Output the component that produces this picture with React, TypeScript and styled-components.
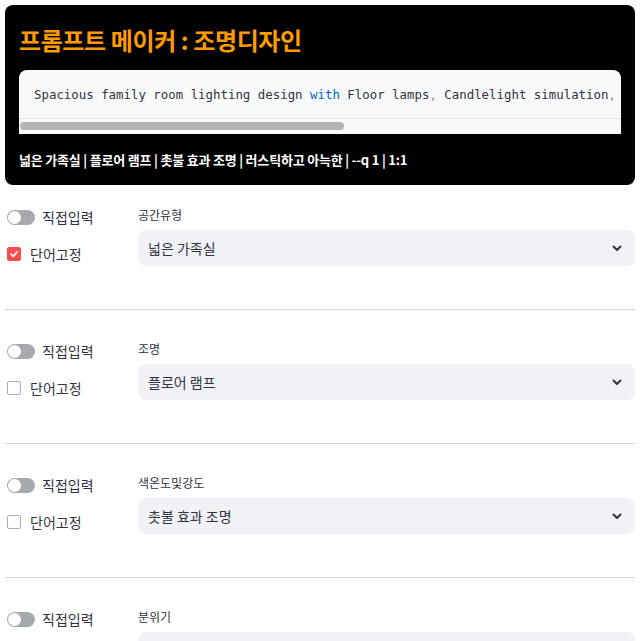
import styled, { createGlobalStyle } from "styled-components";

const GlobalStyle = createGlobalStyle`
  body {
    margin: 0;
    padding: 5px;
    background: #ffffff;
    font-family: "Noto Sans", "Noto Sans CJK KR", sans-serif;
    color: #31333f;
  }
`;

const Header = styled.div`
  background: #000000;
  border-radius: 8px;
  padding: 17px 14px 15px;
  display: flex;
  flex-direction: column;
`;

const Title = styled.h1`
  margin: 0 0 12px;
  font-family: "Noto Sans CJK KR", "Noto Sans", sans-serif;
  font-size: 24px;
  line-height: 36px;
  font-weight: 700;
  color: #ff9a00;
  letter-spacing: -0.4px;
`;

const CodeBox = styled.div`
  background: #f8f9fb;
  border-radius: 8px 8px 0 0;
  overflow: hidden;
`;

const CodeLine = styled.pre`
  margin: 0;
  padding: 15px 15px 13px;
  font-family: "DejaVu Sans Mono", "Liberation Mono", monospace;
  font-size: 12.4px;
  line-height: 20px;
  color: #31333f;
  white-space: pre;
  overflow: hidden;
  border-bottom: 1px solid #e4e5e8;
`;

const Keyword = styled.span`
  color: #0068c9;
`;

const Punct = styled.span`
  color: #8a8d96;
`;

const ScrollTrack = styled.div`
  height: 15px;
  background: #fafafa;
  padding: 3px 1px;
  box-sizing: border-box;
`;

const ScrollThumb = styled.div<{ $width: number }>`
  height: 8px;
  width: ${(p) => p.$width}%;
  background: #b5b5b5;
  border-radius: 4px;
`;

const Summary = styled.div`
  margin-top: 16px;
  font-family: "Noto Sans CJK KR", "Noto Sans", sans-serif;
  font-size: 13px;
  line-height: 20px;
  font-weight: 700;
  color: #ffffff;
  letter-spacing: -0.2px;
`;

const Section = styled.div<{ $first?: boolean }>`
  display: flex;
  padding: ${(p) => (p.$first ? "20px" : "29px")} 0 43px;
  border-bottom: 1px solid #d6d6d9;
`;

const Controls = styled.div`
  width: 133px;
  flex: none;
  display: flex;
  flex-direction: column;
  gap: 17px;
  padding-top: 2px;
`;

const ControlRow = styled.label`
  display: flex;
  align-items: center;
  height: 20px;
  font-family: "Noto Sans CJK KR", "Noto Sans", sans-serif;
  font-size: 14px;
  color: #31333f;
`;

const ToggleTrack = styled.span`
  position: relative;
  width: 28px;
  height: 15px;
  margin: 0 7px 0 2px;
  border-radius: 8px;
  background: #a7a9b0;
  flex: none;
`;

const ToggleKnob = styled.span`
  position: absolute;
  left: 1px;
  top: 1px;
  width: 13px;
  height: 13px;
  border-radius: 50%;
  background: #ffffff;
`;

const Check = styled.span<{ $on: boolean }>`
  width: 14px;
  height: 14px;
  margin: 0 9px 0 2px;
  box-sizing: border-box;
  border-radius: 2px;
  flex: none;
  display: flex;
  align-items: center;
  justify-content: center;
  background: ${(p) => (p.$on ? "#ff4b4b" : "#ffffff")};
  border: 1px solid ${(p) => (p.$on ? "#ff4b4b" : "#a9acb4")};
`;

const Field = styled.div`
  flex: 1;
  display: flex;
  flex-direction: column;
  gap: 5px;
`;

const FieldLabel = styled.div`
  font-family: "Noto Sans CJK KR", "Noto Sans", sans-serif;
  font-size: 12px;
  line-height: 20px;
  color: #31333f;
`;

const Select = styled.div`
  height: 36px;
  background: #f0f2f6;
  border-radius: 8px;
  display: flex;
  align-items: center;
  justify-content: space-between;
  padding: 0 12px 0 10px;
  font-family: "Noto Sans CJK KR", "Noto Sans", sans-serif;
  font-size: 14px;
  color: #31333f;
`;

const rows = [
  { label: "공간유형", value: "넓은 가족실", fixed: true },
  { label: "조명", value: "플로어 램프", fixed: false },
  { label: "색온도및강도", value: "촛불 효과 조명", fixed: false },
  { label: "분위기", value: "러스틱하고 아늑한", fixed: false },
];

const Chevron = () => (
  <svg width="12" height="12" viewBox="0 0 12 12">
    <polyline
      points="2.5,4.5 6,8 9.5,4.5"
      fill="none"
      stroke="#31333f"
      strokeWidth="2"
      strokeLinecap="round"
      strokeLinejoin="round"
    />
  </svg>
);

const CheckMark = () => (
  <svg width="10" height="10" viewBox="0 0 10 10">
    <polyline
      points="2,5.2 4.2,7.3 8,3"
      fill="none"
      stroke="#ffffff"
      strokeWidth="1.8"
      strokeLinecap="round"
      strokeLinejoin="round"
    />
  </svg>
);

export default function App() {
  return (
    <>
      <GlobalStyle />
      <Header>
        <Title>프롬프트 메이커 : 조명디자인</Title>
        <CodeBox>
          <CodeLine>
            Spacious family room lighting design <Keyword>with</Keyword> Floor lamps
            <Punct>,</Punct> Candlelight simulation<Punct>,</Punct> Rustic and cozy
            atmosphere<Punct>,</Punct> high quality<Punct>,</Punct> realistic --q 1 --ar 1:1
          </CodeLine>
          <ScrollTrack>
            <ScrollThumb $width={54} />
          </ScrollTrack>
        </CodeBox>
        <Summary>
          넓은 가족실 | 플로어 램프 | 촛불 효과 조명 | 러스틱하고 아늑한 | --q 1 | 1:1
        </Summary>
      </Header>
      {rows.map((r, i) => (
        <Section key={r.label} $first={i === 0}>
          <Controls>
            <ControlRow>
              <ToggleTrack>
                <ToggleKnob />
              </ToggleTrack>
              직접입력
            </ControlRow>
            <ControlRow>
              <Check $on={r.fixed}>{r.fixed && <CheckMark />}</Check>
              단어고정
            </ControlRow>
          </Controls>
          <Field>
            <FieldLabel>{r.label}</FieldLabel>
            <Select>
              {r.value}
              <Chevron />
            </Select>
          </Field>
        </Section>
      ))}
    </>
  );
}
